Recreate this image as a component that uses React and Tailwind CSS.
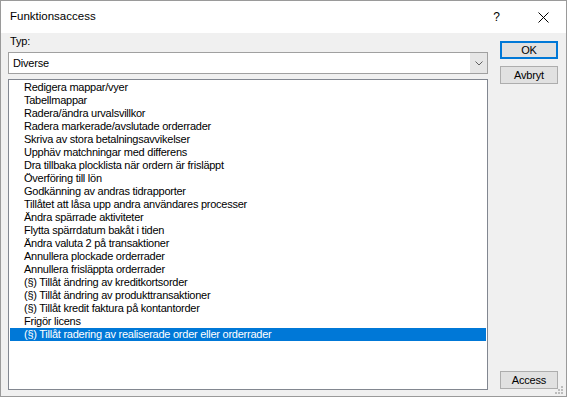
import React from "react";

const items = [
  "Redigera mappar/vyer",
  "Tabellmappar",
  "Radera/ändra urvalsvillkor",
  "Radera markerade/avslutade orderrader",
  "Skriva av stora betalningsavvikelser",
  "Upphäv matchningar med differens",
  "Dra tillbaka plocklista när ordern är frisläppt",
  "Överföring till lön",
  "Godkänning av andras tidrapporter",
  "Tillåtet att låsa upp andra användares processer",
  "Ändra spärrade aktiviteter",
  "Flytta spärrdatum bakåt i tiden",
  "Ändra valuta 2 på transaktioner",
  "Annullera plockade orderrader",
  "Annullera frisläppta orderrader",
  "(§) Tillåt ändring av kreditkortsorder",
  "(§) Tillåt ändring av produkttransaktioner",
  "(§) Tillåt kredit faktura på kontantorder",
  "Frigör licens",
  "(§) Tillåt radering av realiserade order eller orderrader",
];

const SELECTED = items.length - 1;

const font = "font-['Liberation_Sans',Arial,sans-serif]";

const Button = ({ label, primary }) => (
  <div
    className={`h-[18px] flex items-center justify-center bg-[#e1e1e1] text-[11px] tracking-[-0.2px] text-black leading-none ${
      primary ? "border-2 border-[#0078d7]" : "border border-[#adadad]"
    }`}
  >
    {label}
  </div>
);

export default function App() {
  return (
    <div className={`w-[572px] h-[400px] bg-white ${font}`}>
      <div className="w-[567px] h-[397px] border border-[#9a9a9a] flex flex-col">
        {/* title bar */}
        <div className="h-[32px] bg-white flex items-center pl-[9px] pr-[17px] shrink-0">
          <span className="text-[11.5px] text-black">Funktionsaccess</span>
          <span className="ml-auto text-[12px] text-black mr-[38px]">?</span>
          <svg width="11" height="11" viewBox="0 0 11 11" className="shrink-0">
            <path d="M0.5 0.5 L10.5 10.5 M10.5 0.5 L0.5 10.5" stroke="#000" strokeWidth="1" />
          </svg>
        </div>

        {/* body */}
        <div className="flex-1 bg-[#f0f0f0] flex pl-[7px] pr-[7px] pb-[6px]">
          <div className="w-[480px] flex flex-col pt-[2px]">
            <div className="h-[13px] leading-[13px] text-[11px] tracking-[-0.2px] pl-[2px] text-black">Typ:</div>
            <div className="mt-[4px] h-[22px] border border-[#a0a0a0] bg-white flex">
              <div className="flex-1 pl-[4px] flex items-center text-[11px] tracking-[-0.2px] text-black">Diverse</div>
              <div className="w-[17px] bg-[#e6e6e6] flex items-center justify-center">
                <svg width="8" height="5" viewBox="0 0 8 5">
                  <path d="M0.5 0.5 L4 4 L7.5 0.5" stroke="#606060" strokeWidth="1" fill="none" />
                </svg>
              </div>
            </div>
            <div className="mt-[5px] flex-1 border border-[#828790] bg-white p-[1px] overflow-hidden">
              {items.map((t, i) => (
                <div
                  key={t}
                  className={`h-[13px] leading-[13px] pl-[14px] text-[11px] tracking-[-0.25px] whitespace-nowrap ${
                    i === SELECTED ? "bg-[#0078d7] text-white" : "text-black"
                  }`}
                >
                  {t}
                </div>
              ))}
            </div>
          </div>

          <div className="w-[58px] ml-[12px] flex flex-col pt-[8px] pb-[1px] relative">
            <Button label="OK" primary />
            <div className="mt-[7px]">
              <Button label="Avbryt" />
            </div>
            <div className="mt-auto">
              <Button label="Access" />
            </div>
            <svg width="9" height="9" viewBox="0 0 9 9" className="absolute right-[-6px] bottom-[-5px]">
              <rect x="6" y="0" width="2" height="2" fill="#bcbcbc" />
              <rect x="3" y="3" width="2" height="2" fill="#bcbcbc" />
              <rect x="6" y="3" width="2" height="2" fill="#bcbcbc" />
              <rect x="0" y="6" width="2" height="2" fill="#bcbcbc" />
              <rect x="3" y="6" width="2" height="2" fill="#bcbcbc" />
              <rect x="6" y="6" width="2" height="2" fill="#bcbcbc" />
            </svg>
          </div>
        </div>
      </div>
    </div>
  );
}
